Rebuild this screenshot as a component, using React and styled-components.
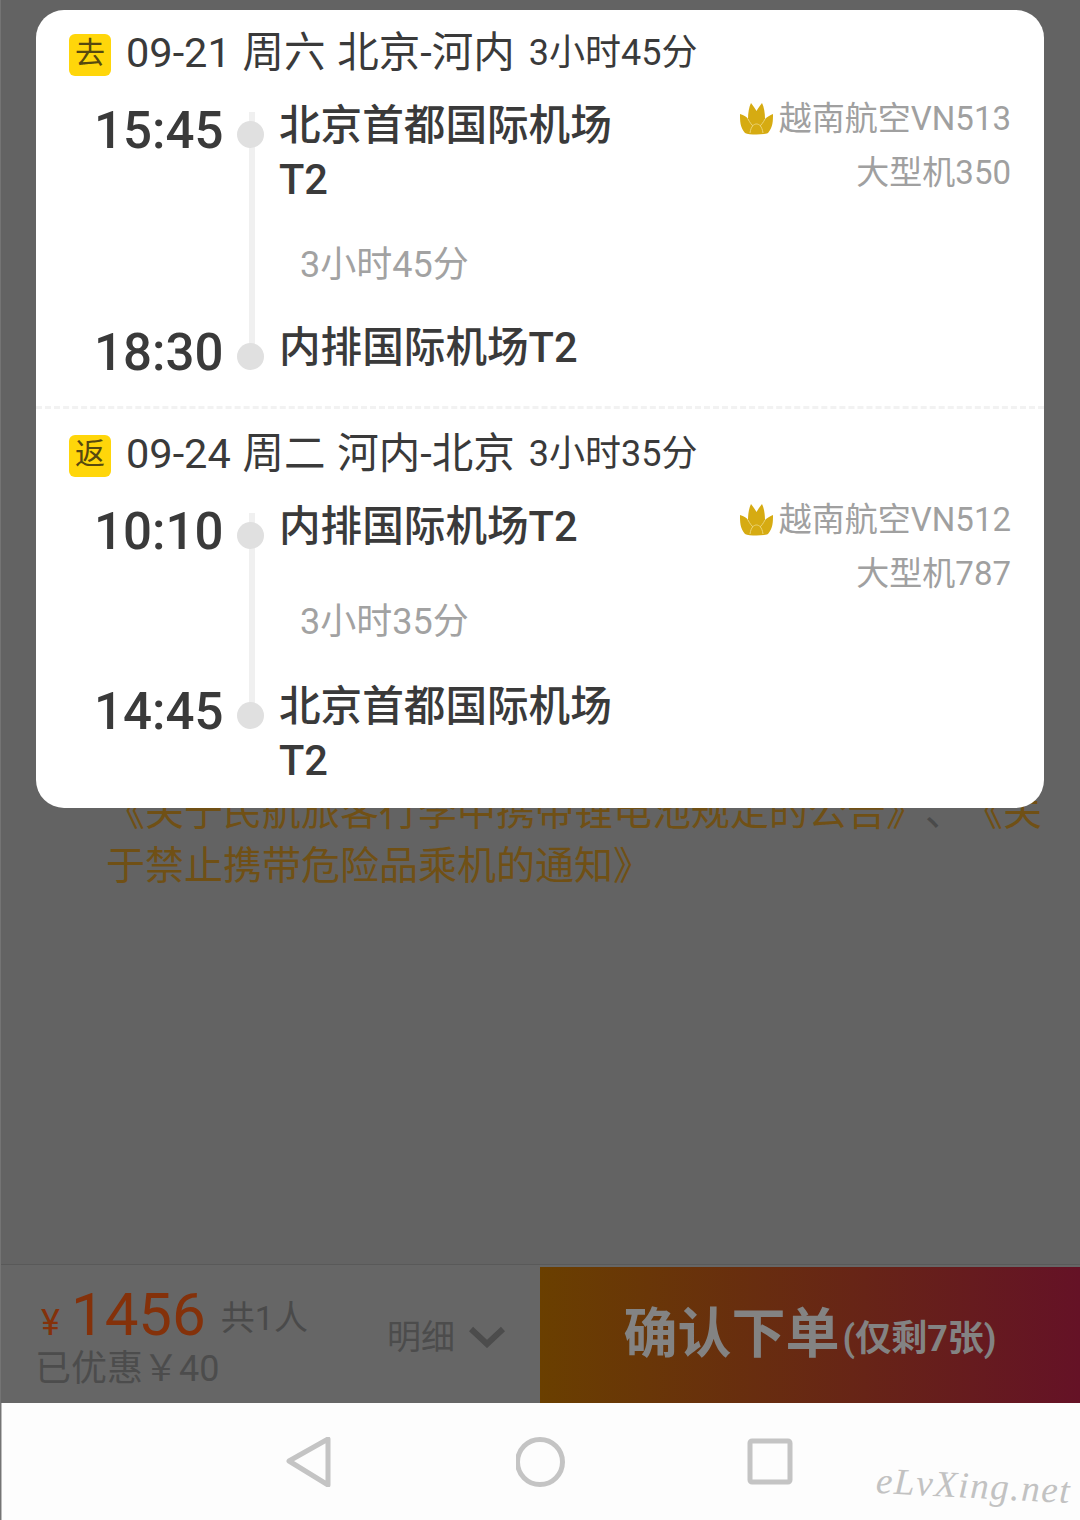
import React from "react";
import styled, { createGlobalStyle } from "styled-components";

const Global = createGlobalStyle`
  html, body { margin: 0; padding: 0; background: #636363; }
  * { box-sizing: border-box; }
  body { font-family: Roboto, "Noto Sans CJK SC", sans-serif; text-spacing-trim: space-all; }
`;

const Page = styled.div`
  position: relative;
  width: 1080px;
  height: 1520px;
  display: flex;
  flex-direction: column;
  overflow: hidden;
  background: #636363;
  border-left: 1px solid #747474;
`;
const Content = styled.main`
  flex: 1;
  padding: 785px 0 0 105px;
`;
const Legal = styled.p`
  margin: 0;
  width: 940px;
  font-size: 39px;
  line-height: 54px;
  color: #705015;
`;
const LegalLine = styled.span`
  display: block;
  white-space: nowrap;
`;
const LegalSep = styled.span`
  color: #4a4a4a;
`;
const Bar = styled.div`
  height: 139px;
  display: flex;
  border-top: 1px solid #595959;
  background: #666666;
`;
const Summary = styled.div`
  width: 539px;
  padding: 13px 0 0 35px;
  display: flex;
  align-items: flex-start;
  justify-content: space-between;
`;
const Prices = styled.div`
  display: flex;
  flex-direction: column;
`;
const PriceLine = styled.div`
  display: flex;
  align-items: baseline;
  height: 74px;
  line-height: 74px;
`;
const Yen = styled.span`
  font-size: 36px;
  margin: 0 11px 0 5px;
  color: #84310a;
`;
const Amount = styled.span`
  font-size: 60px;
  color: #84310a;
`;
const People = styled.span`
  font-size: 34px;
  margin-left: 15px;
  color: #4a4a4a;
  position: relative;
  top: -5px;
`;
const Saved = styled.div`
  font-size: 36px;
  line-height: 44px;
  color: #4c4c4c;
  margin: -5px 0 0 -1px;
`;
const Detail = styled.div`
  display: flex;
  align-items: center;
  gap: 14px;
  margin: 36px 35px 0 0;
  font-size: 34px;
  line-height: 46px;
  color: #4c4c4c;
`;
const Confirm = styled.button`
  flex: 1;
  margin: 2px 0 0;
  padding: 0;
  border: 0;
  font-family: inherit;
  font-weight: 700;
  color: #838383;
  background: linear-gradient(90deg, #6a3f00, #651226);
  display: flex;
  align-items: center;
  justify-content: center;
  line-height: 1;
`;
const ConfirmMain = styled.span`
  font-size: 54px;
`;
const ConfirmNote = styled.span`
  font-size: 36px;
  margin: 8px 0 0 3px;
`;
const Nav = styled.nav`
  position: relative;
  height: 117px;
  background: #fdfdfd;
  display: flex;
  justify-content: center;
  gap: 180px;
  padding: 34px 1px 0 0;
  margin-left: -1px;
  border-left: 2px solid #bcbcbc;
`;
const NavIcon = styled.svg`
  width: 50px;
  height: 50px;
  fill: none;
  stroke: #c4c4c4;
  stroke-width: 5px;
  stroke-linejoin: round;
`;
const Watermark = styled.span`
  position: absolute;
  right: 9px;
  top: 63px;
  font-family: "Liberation Serif", serif;
  font-style: italic;
  font-size: 37px;
  letter-spacing: 1.6px;
  line-height: 40px;
  color: #c2c2c2;
  transform: rotate(3deg);
`;
const Card = styled.section`
  position: absolute;
  left: 35px;
  top: 10px;
  width: 1008px;
  height: 798px;
  background: #fff;
  border-radius: 28px;
  color: #333;
`;
const Leg = styled.div`
  padding: ${(p) => p.$top}px 33px ${(p) => p.$bottom}px 33px;
  border-top: ${(p) => (p.$divided ? "3px dashed #f2f2f2" : "0")};
`;
const LegHead = styled.header`
  display: flex;
  align-items: center;
  height: 42px;
`;
const Badge = styled.span`
  width: 42px;
  height: 42px;
  border-radius: 6px;
  background: #ffd60a;
  color: #57490f;
  font-size: 30px;
  line-height: 38px;
  text-align: center;
  margin-right: 15px;
`;
const HeadText = styled.span`
  font-size: 41.5px;
  word-spacing: 1.5px;
  margin-bottom: 12px;
  color: #3a3a3a;
  white-space: pre;
`;
const HeadDur = styled.span`
  font-size: 36px;
  margin: 0 0 12px 14px;
  color: #3a3a3a;
`;
const Segment = styled.div`
  display: flex;
  justify-content: space-between;
  align-items: flex-start;
  margin-top: 23px;
  padding-left: 27px;
`;
const Timeline = styled.div`
  position: relative;
  width: 520px;
`;
const RailLine = styled.i`
  position: absolute;
  left: 153px;
  top: 13px;
  bottom: ${(p) => p.$end}px;
  width: 6px;
  background: #f0f0f0;
`;
const Stop = styled.div`
  position: relative;
  display: grid;
  grid-template-columns: 141px 27px 1fr;
`;
const Time = styled.span`
  margin: 5px 0 -5px -2px;
  font-size: 51px;
  font-weight: 500;
  line-height: 54px;
  color: #3a3a3a;
`;
const Dot = styled.i`
  width: 27px;
  height: 27px;
  margin-top: 22px;
  border-radius: 50%;
  background: #e0e0e0;
`;
const Airport = styled.span`
  width: 345px;
  margin-left: 15px;
  font-size: 41.6px;
  font-weight: 500;
  line-height: 54px;
  color: #3a3a3a;
`;
const Duration = styled.div`
  margin: ${(p) => p.$before}px 0 ${(p) => p.$after}px 204px;
  font-size: 36px;
  line-height: 54px;
  color: #a2a2a2;
`;
const Info = styled.div`
  margin-top: -7px;
  text-align: right;
  font-size: 33px;
  line-height: 54px;
  color: #a0a0a0;
`;
const Carrier = styled.div`
  display: flex;
  align-items: center;
  justify-content: flex-end;
  gap: 6px;
`;

const Lotus = () => (
  <svg width="33" height="33" viewBox="0 0 33 33" aria-hidden="true">
    <path
      fill="#d6ab12"
      d="M0 11 C4 12 7 14 8 16 C8 10 9 4 11 0 C13 3 15 5 16.5 8 C18 5 20 3 22 0 C24 4 25 10 25 16 C27 14 30 12 33 11 C33 18 33 24 28 30 C24 32 9 32 5 30 C0 24 0 18 0 11Z"
    />
    <path
      d="M10 30 C11 23 14 21 16.5 21 C19 21 22 23 23 30 M8 16 C10 20 12 22 13 23 M25 16 C23 20 21 22 20 23"
      fill="none"
      stroke="#ecd476"
      strokeWidth="1"
    />
  </svg>
);

const Chevron = () => (
  <svg width="36" height="22" viewBox="0 0 36 22" fill="none" stroke="#4c4c4c" strokeWidth="6" aria-hidden="true">
    <path d="M2 3 L18 18 L34 3" />
  </svg>
);

const FlightLeg = ({ badge, head, dur, from, to, carrier, plane, before, after, lineEnd, top, bottom, divided }) => (
  <Leg $top={top} $bottom={bottom} $divided={divided}>
    <LegHead>
      <Badge>{badge}</Badge>
      <HeadText>{head}</HeadText>
      <HeadDur>{dur}</HeadDur>
    </LegHead>
    <Segment>
      <Timeline>
        <RailLine $end={lineEnd} />
        <Stop>
          <Time>{from.time}</Time>
          <Dot />
          <Airport>{from.name}</Airport>
        </Stop>
        <Duration $before={before} $after={after}>{dur}</Duration>
        <Stop>
          <Time>{to.time}</Time>
          <Dot />
          <Airport>{to.name}</Airport>
        </Stop>
      </Timeline>
      <Info>
        <Carrier><Lotus />{carrier}</Carrier>
        <div>{plane}</div>
      </Info>
    </Segment>
  </Leg>
);

export default function App() {
  return (
    <Page>
      <Global />
      <Content>
        <Legal>
          <LegalLine>
            《关于民航旅客行李中携带锂电池规定的公告》<LegalSep>、</LegalSep>《关
          </LegalLine>
          <LegalLine>于禁止携带危险品乘机的通知》</LegalLine>
        </Legal>
      </Content>
      <Bar>
        <Summary>
          <Prices>
            <PriceLine>
              <Yen>¥</Yen>
              <Amount>1456</Amount>
              <People>共1人</People>
            </PriceLine>
            <Saved>已优惠￥40</Saved>
          </Prices>
          <Detail>明细<Chevron /></Detail>
        </Summary>
        <Confirm>
          <ConfirmMain>确认下单</ConfirmMain>
          <ConfirmNote>(仅剩7张)</ConfirmNote>
        </Confirm>
      </Bar>
      <Nav>
        <NavIcon viewBox="0 0 50 50"><path d="M3 24 L42 2 L42 48 Z" /></NavIcon>
        <NavIcon viewBox="0 0 50 50"><circle cx="24" cy="25" r="22.5" /></NavIcon>
        <NavIcon viewBox="0 0 50 50"><rect x="4" y="4" width="40" height="41" rx="2" /></NavIcon>
        <Watermark>eLvXing.net</Watermark>
      </Nav>
      <Card>
        <FlightLeg
          top={24}
          bottom={31}
          badge="去"
          head="09-21 周六 北京-河内"
          dur="3小时45分"
          from={{ time: "15:45", name: "北京首都国际机场T2" }}
          to={{ time: "18:30", name: "内排国际机场T2" }}
          carrier="越南航空VN513"
          plane="大型机350"
          before={31}
          after={29}
          lineEnd={9}
        />
        <FlightLeg
          top={26}
          bottom={0}
          divided
          badge="返"
          head="09-24 周二 河内-北京"
          dur="3小时35分"
          from={{ time: "10:10", name: "内排国际机场T2" }}
          to={{ time: "14:45", name: "北京首都国际机场T2" }}
          carrier="越南航空VN512"
          plane="大型机787"
          before={41}
          after={31}
          lineEnd={66}
        />
      </Card>
    </Page>
  );
}
